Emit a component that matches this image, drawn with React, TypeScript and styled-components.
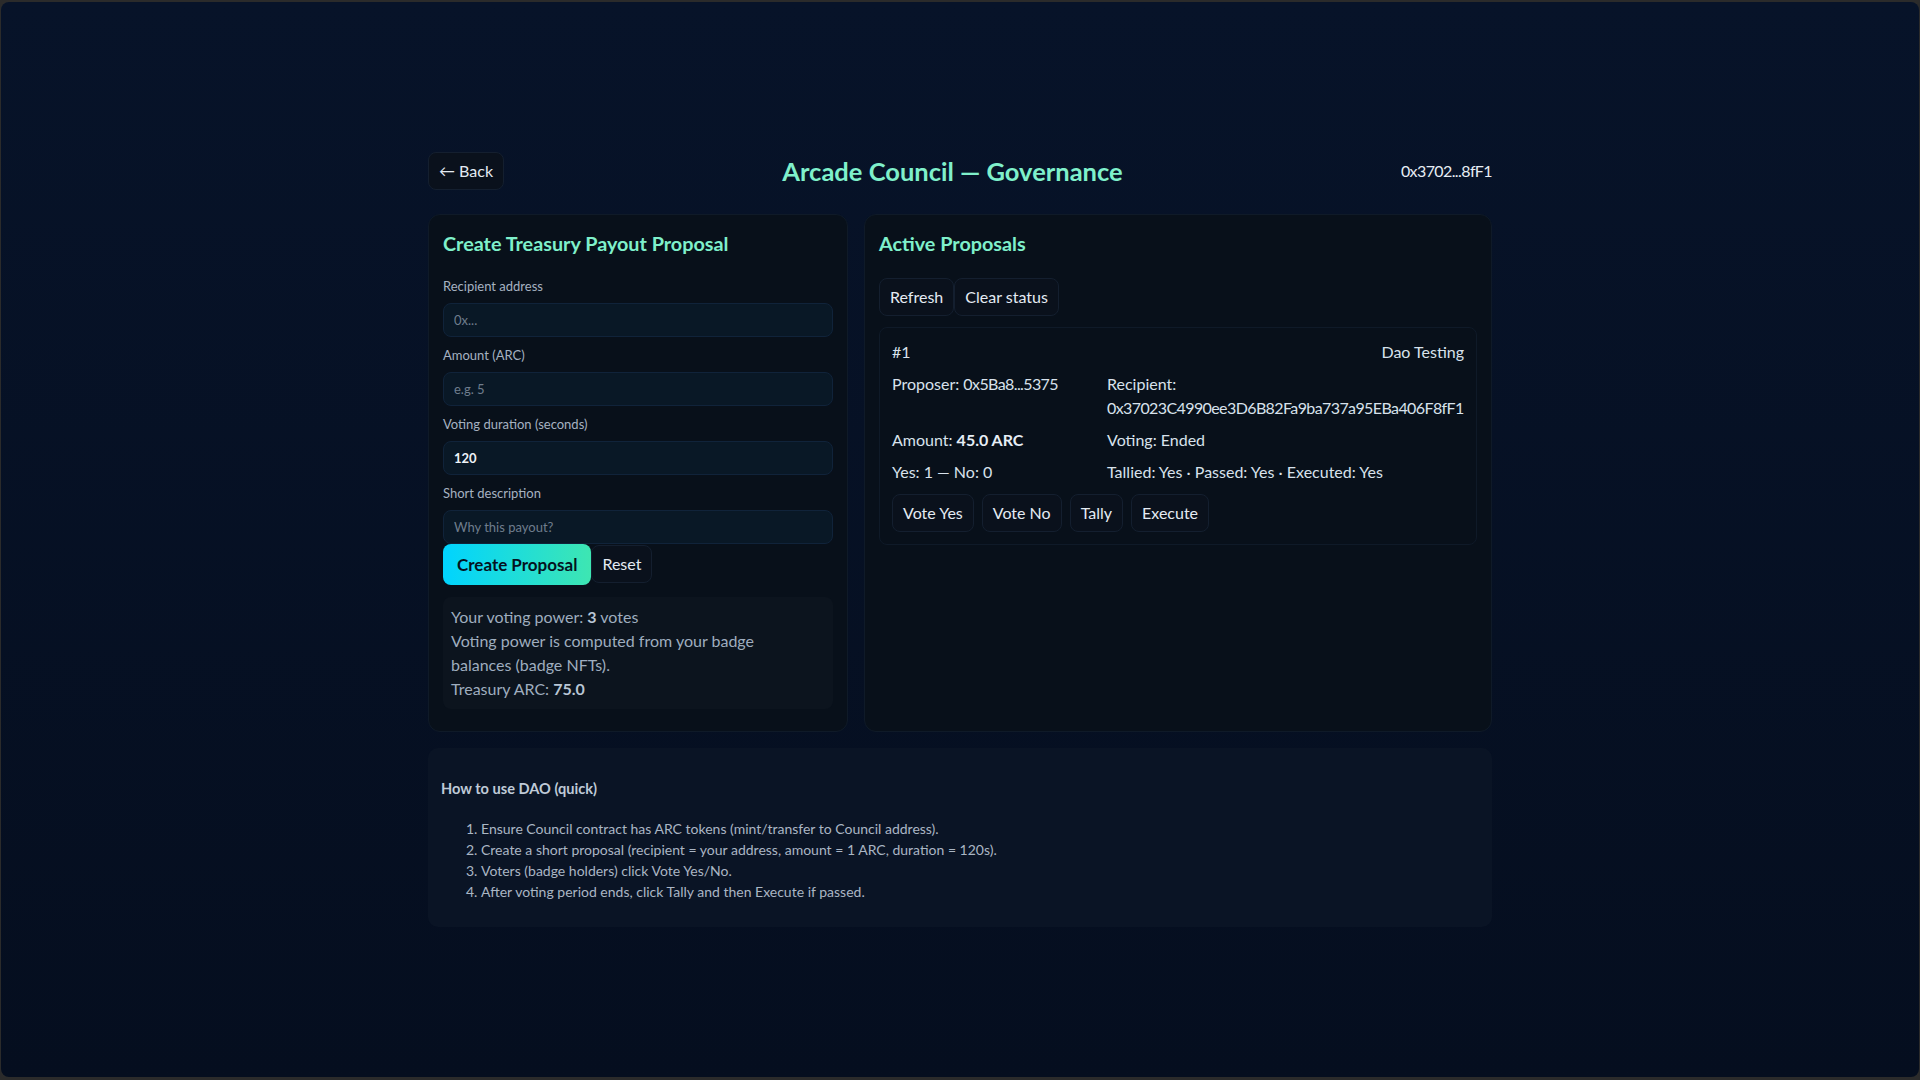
import React from "react";
import styled, { createGlobalStyle } from "styled-components";

const FONT = `Lato, "Noto Sans", "Liberation Sans", sans-serif`;

const GlobalStyle = createGlobalStyle`
  html, body {
    margin: 0;
    padding: 0;
    background: #2b2b2b;
    font-family: ${FONT};
  }
  * { box-sizing: border-box; }
`;

const Frame = styled.div`
  height: 100vh;
  padding: 2px 1px 3px 1px;
  background: #2b2b2b;
`;

const Screen = styled.div`
  height: 100%;
  border-radius: 8px;
  background: linear-gradient(180deg, #071329 0%, #050e1f 100%);
  display: flex;
  align-items: center;
  justify-content: center;
  overflow: hidden;
`;

const Container = styled.div`
  width: 100%;
  max-width: 1100px;
  padding: 18px;
`;

const Header = styled.header`
  display: flex;
  align-items: center;
  justify-content: space-between;
  margin-bottom: 24px;
`;

const GhostButton = styled.button`
  font-family: ${FONT};
  font-size: 16px;
  line-height: 20px;
  padding: 8px 10px;
  color: #e4ebf3;
  background: #0a111c;
  border: 1px solid #141f2f;
  border-radius: 8px;
  cursor: pointer;
  white-space: nowrap;
`;

const PageTitle = styled.h1`
  margin: 0;
  font-size: 25.5px;
  line-height: 32px;
  font-weight: 700;
  color: #7ff0cb;
`;

const Account = styled.span`
  font-size: 16px;
  letter-spacing: -0.6px;
  color: #e6edf4;
`;

const Columns = styled.div`
  display: grid;
  grid-template-columns: 420px 1fr;
  gap: 16px;
`;

const Panel = styled.section`
  background: #08101a;
  border: 1px solid #0f1a28;
  border-radius: 12px;
  padding: 14px;
`;

const PanelTitle = styled.h2`
  margin: 2px 0 23px;
  font-size: 19.8px;
  line-height: 24px;
  font-weight: 700;
  color: #7ff0cb;
`;

const Field = styled.div`
  & + & {
    margin-top: 10px;
  }
`;

const FieldLabel = styled.label`
  display: block;
  font-size: 13px;
  line-height: 17px;
  color: #a6b2c1;
  margin-bottom: 8px;
`;

const TextInput = styled.input<{ $strong?: boolean }>`
  display: block;
  width: 100%;
  height: 34px;
  padding: 0 10px;
  font-family: ${FONT};
  font-size: 13px;
  font-weight: ${(p) => (p.$strong ? 700 : 400)};
  color: #eef3f8;
  background: #091826;
  border: 1px solid #10233a;
  border-radius: 8px;
  outline: none;

  &::placeholder {
    color: #6f7d8d;
  }
`;

const ButtonRow = styled.div`
  display: flex;
  align-items: center;
`;

const PrimaryButton = styled.button`
  font-family: ${FONT};
  font-size: 17px;
  line-height: 21px;
  font-weight: 700;
  padding: 10px 14px;
  color: #04131f;
  background: linear-gradient(90deg, #00d4ff 0%, #3ee6b2 100%);
  border: none;
  border-radius: 8px;
  cursor: pointer;
`;

const InfoBox = styled.div`
  margin: 12px 0 8px;
  padding: 8px;
  background: #0c141e;
  border-radius: 8px;
  font-size: 16px;
  line-height: 24px;
  color: #9fadbf;

  b {
    color: #b9c6d5;
    font-weight: 700;
  }
`;

const InfoLine = styled.div<{ $narrow?: boolean }>`
  max-width: ${(p) => (p.$narrow ? "340px" : "none")};
`;

const Toolbar = styled.div`
  display: flex;
  margin-bottom: 11px;
`;

const ProposalCard = styled.article`
  border: 1px solid #0f1a28;
  border-radius: 8px;
  padding: 12px;
  background: #08101a;
  font-size: 16px;
  line-height: 24px;
  color: #d8e2ec;

  b {
    font-weight: 700;
    color: #e6eef6;
  }
`;

const ProposalHead = styled.div`
  display: flex;
  justify-content: space-between;
  margin-bottom: 8px;
`;

const ProposalGrid = styled.div`
  display: grid;
  grid-template-columns: 201px 1fr;
  column-gap: 14px;
  row-gap: 8px;
`;

const AddressValue = styled.span`
  letter-spacing: -0.6px;
  white-space: nowrap;
`;

const ActionRow = styled.div`
  display: flex;
  gap: 8px;
  margin-top: 10px;
`;

const HelpBox = styled.section`
  margin-top: 16px;
  padding: 12px 13px 11px;
  background: #0a1425;
  border-radius: 10px;
`;

const HelpTitle = styled.h4`
  margin: 19px 0 20px;
  font-size: 14.6px;
  line-height: 19px;
  font-weight: 700;
  color: #bfcad7;
`;

const HelpList = styled.ol`
  margin: 20px 0 14px;
  padding-left: 40px;
  font-size: 14px;
  line-height: 21.2px;
  color: #aab6c4;
`;

export default function App() {
  return (
    <>
      <GlobalStyle />
      <Frame>
        <Screen>
          <Container>
            <Header>
              <GhostButton>← Back</GhostButton>
              <PageTitle>Arcade Council — Governance</PageTitle>
              <Account>0x3702...8fF1</Account>
            </Header>

            <Columns>
              <Panel>
                <PanelTitle>Create Treasury Payout Proposal</PanelTitle>
                <Field>
                  <FieldLabel>Recipient address</FieldLabel>
                  <TextInput placeholder="0x..." />
                </Field>
                <Field>
                  <FieldLabel>Amount (ARC)</FieldLabel>
                  <TextInput placeholder="e.g. 5" />
                </Field>
                <Field>
                  <FieldLabel>Voting duration (seconds)</FieldLabel>
                  <TextInput $strong defaultValue="120" />
                </Field>
                <Field>
                  <FieldLabel>Short description</FieldLabel>
                  <TextInput placeholder="Why this payout?" />
                </Field>
                <ButtonRow>
                  <PrimaryButton>Create Proposal</PrimaryButton>
                  <GhostButton>Reset</GhostButton>
                </ButtonRow>
                <InfoBox>
                  <InfoLine>
                    Your voting power: <b>3</b> votes
                  </InfoLine>
                  <InfoLine $narrow>
                    Voting power is computed from your badge balances (badge NFTs).
                  </InfoLine>
                  <InfoLine>
                    Treasury ARC: <b>75.0</b>
                  </InfoLine>
                </InfoBox>
              </Panel>

              <Panel>
                <PanelTitle>Active Proposals</PanelTitle>
                <Toolbar>
                  <GhostButton>Refresh</GhostButton>
                  <GhostButton>Clear status</GhostButton>
                </Toolbar>
                <ProposalCard>
                  <ProposalHead>
                    <span>#1</span>
                    <span>Dao Testing</span>
                  </ProposalHead>
                  <ProposalGrid>
                    <div>
                      Proposer: <AddressValue>0x5Ba8...5375</AddressValue>
                    </div>
                    <div>
                      Recipient:{" "}
                      <AddressValue>0x37023C4990ee3D6B82Fa9ba737a95EBa406F8fF1</AddressValue>
                    </div>
                    <div>
                      Amount: <b>45.0 ARC</b>
                    </div>
                    <div>Voting: Ended</div>
                    <div>Yes: 1 — No: 0</div>
                    <div>Tallied: Yes · Passed: Yes · Executed: Yes</div>
                  </ProposalGrid>
                  <ActionRow>
                    <GhostButton>Vote Yes</GhostButton>
                    <GhostButton>Vote No</GhostButton>
                    <GhostButton>Tally</GhostButton>
                    <GhostButton>Execute</GhostButton>
                  </ActionRow>
                </ProposalCard>
              </Panel>
            </Columns>

            <HelpBox>
              <HelpTitle>How to use DAO (quick)</HelpTitle>
              <HelpList>
                <li>Ensure Council contract has ARC tokens (mint/transfer to Council address).</li>
                <li>Create a short proposal (recipient = your address, amount = 1 ARC, duration = 120s).</li>
                <li>Voters (badge holders) click Vote Yes/No.</li>
                <li>After voting period ends, click Tally and then Execute if passed.</li>
              </HelpList>
            </HelpBox>
          </Container>
        </Screen>
      </Frame>
    </>
  );
}
